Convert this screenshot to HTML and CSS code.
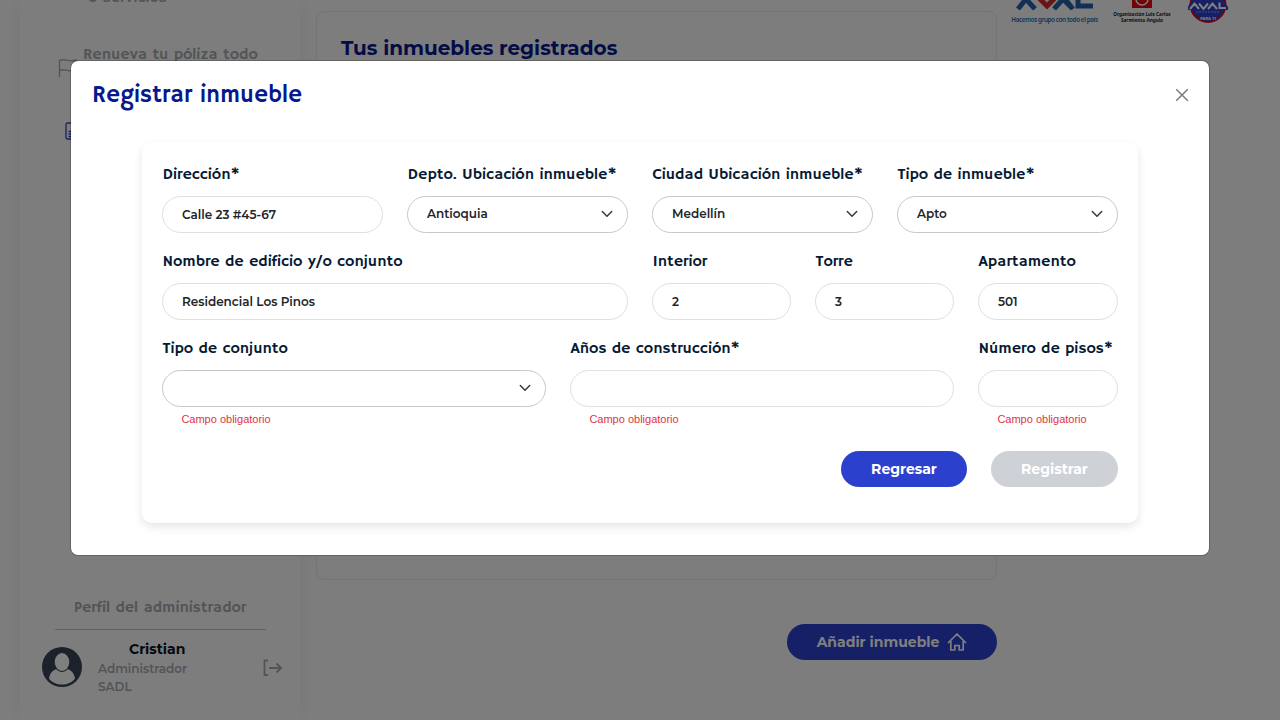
FILE: index.html
```html
<!DOCTYPE html>
<html lang="es">
<head>
<meta charset="utf-8">
<title>Registrar inmueble</title>
<link rel="stylesheet" href="styles.css">
</head>
<body>
<div class="page">
  <aside class="sidebar">
    <nav class="side-nav">
      <span class="side-link side-cut">o servicios</span>
      <span class="side-link side-renew">Renueva tu póliza todo</span>
      <svg class="flag" width="20" height="20" viewBox="0 0 20 20" fill="none" stroke="#a3aab1" stroke-width="1.4"><path d="M1.5 19V2.5C6-.5 10 5 18 2V12C10 15 6 9.500 1.500 12.500"/></svg>
      <svg class="doc" width="16" height="18" viewBox="0 0 16 18" fill="none" stroke="#2c40ce" stroke-width="1.300"><rect x="1" y="1" width="14" height="16" rx="1.500"/><path d="M3.500 9.500H12M3.500 12H12M3.500 14.500H12"/></svg>
    </nav>
    <div class="profile">
      <h3 class="profile-title">Perfil del administrador</h3>
      <div class="profile-row">
        <svg class="avatar" width="40" height="40" viewBox="0 0 40 40"><circle cx="20" cy="20" r="20" fill="#384456"/><ellipse cx="20" cy="15" rx="7.300" ry="9" fill="#fff"/><path d="M7 31.500C8 26 11 23 14.500 22.300C17.500 26 22.500 26 25.500 22.300C29 23 32 26 33 31.500C27 39.500 13 39.500 7 31.500Z" fill="#fff"/></svg>
        <div class="who"><b class="name">Cristian</b><span class="role">Administrador</span><span class="role">SADL</span></div>
        <svg class="logout" width="20" height="18" viewBox="0 0 20 18" fill="none" stroke="#a3aab1" stroke-width="1.800"><path d="M5 1.500H1.500V16H5M6 9H18M13.500 4.500L18 9L13.500 13.500"/></svg>
      </div>
    </div>
  </aside>
  <main class="main">
    <section class="panel"><h2 class="panel-title">Tus inmuebles registrados</h2></section>
    <button class="btn add"><span class="add-text">Añadir inmueble</span><svg width="20" height="18" viewBox="0 0 20 18" fill="none" stroke="#fff" stroke-width="1.700" stroke-linejoin="round" stroke-linecap="round"><path d="M1.500 9.500L10 1L18.500 9.500M3.800 8V17H7.800V12.500H12.200V17H16.200V8"/></svg></button>
  </main>
  <div class="logos">
    <div class="logo logo-aval"><svg width="78" height="10" viewBox="0 0 78 10" fill="none" stroke-width="5"><path d="M2 9L10 -1L19 9M38 9L47 -1L57 9M49 -1L57 9" stroke="#245fa8"/><path d="M23 -2L31 6L39 -2" stroke="#d42b2b"/><path d="M62 -1V6H77" stroke="#245fa8"/></svg><span class="logo-text blue">Hacemos grupo con todo el país</span></div>
    <div class="logo logo-org"><svg width="20" height="8" viewBox="0 0 20 8"><path fill="#e30613" d="M0 0H20V8H0z"/><path d="M4 -1A6 6 0 0 0 16 -1" fill="none" stroke="#fff" stroke-width="1.500"/></svg><span class="logo-text black">Organización Luis Carlos<br>Sarmiento Angulo</span></div>
    <div class="logo"><svg width="40" height="24" viewBox="0 0 40 24"><circle cx="20" cy="4.500" r="17.500" fill="#2c40ce" stroke="#e30613" stroke-width="1.800"/><path d="M2 3H37L40 7V10H0V7z" fill="#2c40ce"/><path d="M2 9L6.500 3.500L11 9M11 3.500L15.500 9L20 3.500M20 9L24.500 3.500L29 9M31.500 2.500V8H38" fill="none" stroke="#fff" stroke-width="2"/><path d="M8 12H32" stroke="#aab5ff" stroke-width=".800" stroke-dasharray="2 1"/><text x="20" y="20" text-anchor="middle" class="badge-text">PARA TI</text></svg></div>
  </div>
</div>
<div class="backdrop"></div>
<div class="modal">
  <header class="modal-head"><h1 class="modal-title">Registrar inmueble</h1>
  <svg class="close" width="14" height="14" viewBox="0 0 14 14" fill="none" stroke="#7b7b7b" stroke-width="1.500"><path d="M1.200 1.200L12.800 12.800M12.800 1.200L1.200 12.800"/></svg></header>
  <form class="card">
    <div class="row r1">
      <div class="field"><label>Dirección*</label><div class="input">Calle 23 #45-67</div></div>
      <div class="field"><label>Depto. Ubicación inmueble*</label><div class="input select">Antioquia<svg width="12" height="8" viewBox="0 0 12 8"><path d="M1.300 1.500L6 6.200L10.700 1.500"/></svg></div></div>
      <div class="field"><label>Ciudad Ubicación inmueble*</label><div class="input select">Medellín<svg width="12" height="8" viewBox="0 0 12 8"><path d="M1.300 1.500L6 6.200L10.700 1.500"/></svg></div></div>
      <div class="field"><label>Tipo de inmueble*</label><div class="input select">Apto<svg width="12" height="8" viewBox="0 0 12 8"><path d="M1.300 1.500L6 6.200L10.700 1.500"/></svg></div></div>
    </div>
    <div class="row r2">
      <div class="field"><label>Nombre de edificio y/o conjunto</label><div class="input">Residencial Los Pinos</div></div>
      <div class="field"><label>Interior</label><div class="input">2</div></div>
      <div class="field"><label>Torre</label><div class="input">3</div></div>
      <div class="field"><label>Apartamento</label><div class="input">501</div></div>
    </div>
    <div class="row r3">
      <div class="field"><label>Tipo de conjunto</label><div class="input select"><svg width="12" height="8" viewBox="0 0 12 8"><path d="M1.300 1.500L6 6.200L10.700 1.500"/></svg></div><span class="error">Campo obligatorio</span></div>
      <div class="field"><label>Años de construcción*</label><div class="input"></div><span class="error">Campo obligatorio</span></div>
      <div class="field"><label>Número de pisos*</label><div class="input"></div><span class="error">Campo obligatorio</span></div>
    </div>
    <div class="actions"><button type="button" class="btn back">Regresar</button><button type="button" class="btn save" disabled>Registrar</button></div>
  </form>
</div>
</body>
</html>
```
FILE: styles.css
```css
* { box-sizing: border-box; }
body { margin: 0; width: 1280px; height: 720px; overflow: hidden; background: #fbfbfb; font-family: "Montserrat", "Inter", sans-serif; }
h1, h2, h3 { margin: 0; }
.page { display: flex; height: 720px; overflow: hidden; }
.sidebar { width: 280px; margin-left: 20px; flex: none; display: flex; flex-direction: column; justify-content: space-between; background: #fbfbfb; box-shadow: 0 0 20px rgba(0,0,0,.06); }
.side-nav { display: grid; grid-template: 37px 81px 1fr / 20px 1fr; padding-left: 38px; height: 150px; }
.side-link { font: 400 16px/20px "Hammersmith One", "Lato", sans-serif; color: #a3aab1; white-space: nowrap; }
.side-cut { grid-column: 2; grid-row: 1; margin: -12px 0 0 10px; }
.side-renew { grid-column: 2; grid-row: 2; margin: 8px 0 0 5px; }
.flag { grid-column: 1; grid-row: 2; margin-top: 21px; }
.doc { grid-column: 1; grid-row: 3; margin: 4px 0 0 7px; }
.profile { height: 124px; padding: 0 16px 0 22px; }
.profile-title { width: 211px; height: 34px; margin-left: 13px; padding-left: 19px; font: 400 16px/24px "Hammersmith One", "Lato", sans-serif; color: #a3aab1; border-bottom: 1px solid #c0bfe2; white-space: nowrap; }
.profile-row { display: flex; align-items: flex-start; }
.avatar { margin-top: 17px; flex: none; }
.who { display: flex; flex-direction: column; margin-left: 16px; padding-top: 9px; width: 165px; }
.name { font-size: 14px; line-height: 20px; margin: 0 0 1px 31px; color: #08101b; }
.role { font-size: 12px; line-height: 18px; font-weight: 600; color: #a3aab1; }
.logout { margin-top: 29px; flex: none; }
.main { width: 681px; margin-left: 16px; flex: none; display: flex; flex-direction: column; align-items: flex-end; }
.panel { width: 681px; height: 569px; margin-top: 11px; border: 1px solid #e6e8ea; border-radius: 8px; padding: 22px 24px; }
.panel-title { font-size: 20px; line-height: 28px; font-weight: 700; color: #07198d; white-space: nowrap; }
.btn { height: 36px; border: 0; border-radius: 18px; display: flex; align-items: center; justify-content: center; font: 700 14px "Montserrat", "Inter", sans-serif; color: #fff; background: #2c40ce; padding: 0; white-space: nowrap; }
.add { width: 210px; margin-top: 44px; gap: 8px; }
.logos { display: flex; margin-left: 15px; align-items: flex-start; }
.logo { display: flex; flex-direction: column; align-items: center; }
.logo-aval { width: 85px; }
.logo-org { width: 60px; margin: 0 16px 0 15px; }
.logo-text { font-family: "Noto Sans", sans-serif; font-weight: 700; white-space: nowrap; text-align: center; }
.blue { font-size: 6.300px; font-weight: 600; letter-spacing: -.4px; line-height: 10px; margin-top: 5px; color: #2970b8; }
.black { font-size: 4.700px; line-height: 5.500px; margin-top: 4px; color: #222; }
.badge-text { font: 700 4px "Inter", sans-serif; fill: #fff; }
.backdrop { position: absolute; inset: 0; background: rgba(0,0,0,.5); }
.modal { position: absolute; left: 70px; top: 60px; width: 1140px; height: 496px; background: #fff; background-clip: padding-box; border: 1px solid rgba(0,0,0,.2); border-radius: 8px; }
.modal-head { display: flex; justify-content: space-between; height: 81px; padding: 17px 20px 0 21px; }
.modal-title { font: 400 24px/34px "Hammersmith One", "Lato", sans-serif; color: #07198d; }
.close { margin-top: 10px; }
.card { width: 996px; height: 381px; margin: 0 auto; border-radius: 10px; box-shadow: 0 4px 10px rgba(0,0,0,.1); padding: 22px 20px 0; }
.row { display: grid; column-gap: 24px; height: 87px; }
.r1 { grid-template-columns: repeat(4, 221px); }
.r2 { grid-template-columns: 466px 139px 139px 140px; }
.r3 { grid-template-columns: 384px 384px 140px; height: 113px; }
.field { display: flex; flex-direction: column; min-width: 0; }
label { font: 400 16px/22px "Hammersmith One", "Lato", sans-serif; color: #061a33; height: 32px; padding-left: .4px; white-space: nowrap; align-self: flex-start; }
.input { height: 37px; border: 1px solid #dee0e8; border-radius: 19px; padding: 0 14px 0 19px; display: flex; align-items: center; justify-content: space-between; font-size: 12px; font-weight: 600; color: #212529; white-space: nowrap; }
.select { border-color: #c7c8ca; padding-bottom: 2px; }
.select svg { margin-left: auto; fill: none; stroke: #343a40; stroke-width: 1.500; stroke-linecap: round; stroke-linejoin: round; }
.error { margin: 6px 0 0 19.400px; font: 11px/13px "Liberation Sans", sans-serif; color: #dc3545; }
.actions { display: flex; justify-content: flex-end; gap: 24px; }
.back { width: 126px; }
.save { width: 127px; background: #ced2d6; }
```
